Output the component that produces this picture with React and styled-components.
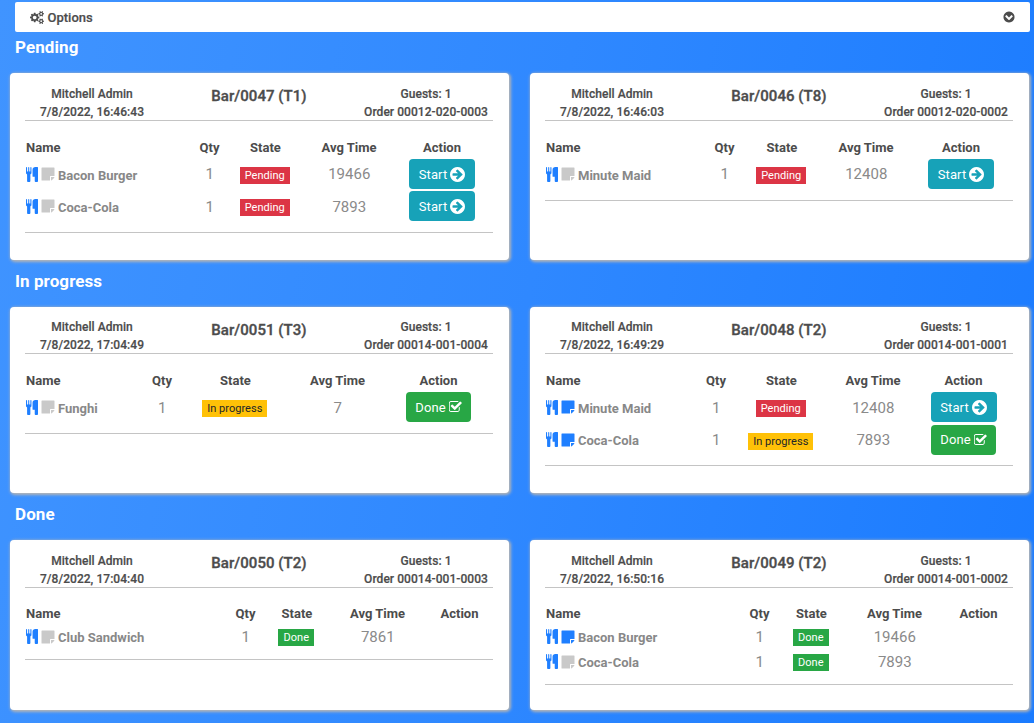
import React from 'react';
import styled, { createGlobalStyle } from 'styled-components';

const GlobalStyle = createGlobalStyle`
  * { box-sizing: border-box; }
  html, body { margin: 0; height: 100%; overflow: hidden; }
  body { font-family: Roboto, "Liberation Sans", sans-serif; color: #4c4c4c; }
`;

const Screen = styled.main`
  height: 723px;
  padding: 2px 4px 0 9.5px;
  overflow: hidden;
  background: linear-gradient(100deg, #4094ff 0%, #2f88ff 50%, #1a7bff 100%);
`;

const OptionsBar = styled.header`
  display: flex;
  align-items: center;
  justify-content: space-between;
  height: 30px;
  margin-left: 5.5px;
  padding: 0 15px;
  background: #fff;
  border-radius: 2px;
`;

const OptionsLabel = styled.span`
  display: flex;
  align-items: center;
  gap: 3.5px;
  font-size: 13px;
  font-weight: 500;
  -webkit-text-stroke: 0.2px;
`;

const Section = styled.section`
  height: ${(p) => p.$height}px;
`;

const SectionTitle = styled.h2`
  height: 41px;
  margin: 0;
  padding-left: 5.5px;
  font-size: 17px;
  line-height: 31px;
  font-weight: 700;
  letter-spacing: 0.08px;
  color: #fff;
`;

const CardRow = styled.div`
  display: grid;
  grid-template-columns: 499px 499px;
  gap: 21px;
`;

const Card = styled.article`
  height: ${(p) => p.$height}px;
  padding: ${(p) => p.$top}px 15.5px 0;
  background: #fff;
  border-radius: 4px;
  box-shadow: 1px 1px 3px 1px #b5b5b5;
`;

const CardHeader = styled.div`
  display: grid;
  grid-template-columns: 134px 200px 134px;
  height: 36px;
  border-bottom: 1px solid #c4c4c4;
  text-align: center;
`;

const Meta = styled.div`
  font-size: 12px;
  line-height: 18px;
  font-weight: 500;
  letter-spacing: 0.05px;
  white-space: nowrap;
  -webkit-text-stroke: 0.2px;
`;

const Title = styled.h3`
  margin: 0;
  font-size: 15px;
  line-height: ${(p) => p.$lineHeight}px;
  font-weight: 500;
  letter-spacing: 0.05px;
  -webkit-text-stroke: 0.35px;
`;

const Lines = styled.div`
  padding: ${(p) => p.$top}px 0 ${(p) => p.$bottom}px;
  border-bottom: 1px solid #c4c4c4;
`;

const Line = styled.div`
  display: grid;
  grid-template-columns: ${(p) => p.$columns};
  align-items: center;
  justify-items: center;
  height: ${(p) => p.$height}px;
`;

const HeadCell = styled.span`
  padding-left: ${(p) => (p.$start ? 1 : 0)}px;
  justify-self: ${(p) => (p.$start ? 'start' : 'center')};
  font-size: 13px;
  font-weight: 700;
  white-space: nowrap;
`;

const Product = styled.span`
  display: flex;
  align-items: center;
  justify-self: start;
  gap: 3px;
  padding-left: 1px;
  font-size: 13px;
  font-weight: 700;
  color: #888;
  white-space: nowrap;
`;

const ProductName = styled.span`
  padding-top: 2px;
`;

const Figure = styled.span`
  padding: 0.5px 0 0 0.5px;
  font-size: 15px;
  color: #8a8a8a;
`;

const stateColors = {
  Pending: ['#dc3545', '#fff'],
  'In progress': ['#ffc107', '#212529'],
  Done: ['#28a745', '#fff'],
};

const Badge = styled.span`
  height: 17px;
  margin: ${(p) => (p.$state === 'Done' ? 2 : 3)}px 1.5px 0 0;
  padding: 1px 5px 0;
  font-size: 11px;
  line-height: 16px;
  letter-spacing: 0.03px;
  white-space: nowrap;
  background: ${(p) => stateColors[p.$state][0]};
  color: ${(p) => stateColors[p.$state][1]};
`;

const ActionButton = styled.button`
  display: flex;
  align-items: center;
  justify-content: center;
  gap: 3px;
  width: ${(p) => (p.$done ? 65 : 66)}px;
  height: 30px;
  padding: 0;
  border: 0;
  border-radius: 4px;
  font: 400 13px Roboto, "Liberation Sans", sans-serif;
  letter-spacing: 0.1px;
  color: #fff;
  background: ${(p) => (p.$done ? '#28a745' : '#17a2b8')};
`;

const Glyph = styled.svg`
  display: block;
  flex: none;
  fill: ${(p) => p.$color || 'currentColor'};
`;

const DISC = 'q0 209-103 385.5t-279.5 279.5-385.5 103-385.5-103-279.5-279.5-103-385.5 103-385.5 279.5-279.5 385.5-103 385.5 103 279.5 279.5 103 385.5z';
const SMALL_COG = 'v140q0 16-149 31-12 27-30 52 51 113 51 138 0 4-4 7-122 71-124 71-8 0-46-47t-52-68q-20 2-30 2t-30-2q-14 21-52 68t-46 47q-2 0-124-71-4-3-4-7 0-25 51-138-18-25-30-52-149-15-149-31v-140q0-16 149-31 13-29 30-52-51-113-51-138 0-4 4-7 4-2 35-20t59-34 30-16q8 0 46 46.5t52 67.5q20-2 30-2t30 2q51-71 92-112l6-2q4 0 124 70 4 3 4 7 0 25-51 138 17 23 30 52 149 15 149 31z';

const CogsIcon = () => (
  <Glyph width="14" height="13" viewBox="0 0 1920 1792">
    <path d={'M896 896q0-106-75-181t-181-75-181 75-75 181 75 181 181 75 181-75 75-181zm768 512q0-52-38-90t-90-38-90 38-38 90q0 53 37.5 90.5t90.5 37.5 90.5-37.5 37.5-90.5zm0-1024q0-52-38-90t-90-38-90 38-38 90q0 53 37.5 90.5t90.5 37.5 90.5-37.5 37.5-90.5zm-384 421v185q0 10-7 19.5t-16 10.5l-155 24q-11 35-32 76 34 48 90 115 7 11 7 20 0 12-7 19-23 30-82.5 89.5t-78.5 59.5q-11 0-21-7l-115-90q-37 19-77 31-11 108-23 155-7 24-30 24h-186q-11 0-20-7.5t-10-17.5l-23-153q-34-10-75-31l-118 89q-7 7-20 7-11 0-21-8-144-133-144-160 0-9 7-19 10-14 41-53t47-61q-23-44-35-82l-152-24q-10-1-17-9.5t-7-19.5v-185q0-10 7-19.5t16-10.5l155-24q11-35 32-76-34-48-90-115-7-11-7-20 0-12 7-20 22-30 82-89t79-59q11 0 21 7l115 90q34-18 77-32 11-108 23-154 7-24 30-24h186q11 0 20 7.5t10 17.5l23 153q34 10 75 31l118-89q8-7 20-7 11 0 21 8 144 133 144 160 0 8-7 19-12 16-42 54t-45 60q23 48 34 82l152 23q10 2 17 10.5t7 19.5zm640 533' + SMALL_COG + 'm0-1024' + SMALL_COG} />
  </Glyph>
);

const ChevronCircleIcon = () => (
  <Glyph width="12" height="12" viewBox="64 64 1664 1664">
    <path fillRule="evenodd" d={'M941 1299l454-454q19-19 19-45t-19-45l-102-102q-19-19-45-19t-45 19l-307 307-307-307q-19-19-45-19t-45 19l-102 102q-19 19-19 45t19 45l454 454q19 19 45 19t45-19zM1664 896' + DISC} />
  </Glyph>
);

const CutleryIcon = () => (
  <Glyph $color="#1f7fff" width="12" height="15" viewBox="192 0 1408 1792" preserveAspectRatio="none">
    <path d="M832 64v640q0 61-35.5 111t-92.5 70v779q0 52-38 90t-90 38h-128q-52 0-90-38t-38-90v-779q-57-20-92.5-70t-35.5-111v-640q0-26 19-45t45-19 45 19 19 45v416q0 26 19 45t45 19 45-19 19-45v-416q0-26 19-45t45-19 45 19 19 45v416q0 26 19 45t45 19 45-19 19-45v-416q0-26 19-45t45-19 45 19 19 45zm768 0v1600q0 52-38 90t-90 38h-128q-52 0-90-38t-38-90v-512h-224q-13 0-22.5-9.5t-9.5-22.5v-800q0-132 94-226t226-94h256q26 0 45 19t19 45z" />
  </Glyph>
);

const NoteIcon = ({ active }) => (
  <Glyph $color={active ? '#1f7fff' : '#c9c9c9'} width="14" height="14" viewBox="0 0 14 14">
    <path d="M1 .5H13Q13.5 .5 13.5 1V9H9.5Q9 9 9 9.5V13.5H1Q.5 13.5 .5 13V1Q.5 .5 1 .5ZM10 10H13.4Q13.3 10.8 12.8 11.3L11.3 12.8Q10.8 13.3 10 13.4Z" />
  </Glyph>
);

const ArrowCircleIcon = () => (
  <Glyph width="15" height="15" viewBox="128 128 1536 1536">
    <path fillRule="evenodd" d={'M1413 896q0-27-18-45l-91-91-362-362q-18-18-45-18t-45 18l-91 91q-18 18-18 45t18 45l189 189h-502q-26 0-45 19t-19 45v128q0 26 19 45t45 19h502l-189 189q-18 18-18 45t18 45l91 91q18 18 45 18t45-18l362-362 91-91q18-18 18-45zM1664 896' + DISC} />
  </Glyph>
);

const CheckSquareIcon = () => (
  <Glyph width="13" height="12" viewBox="128 128 1600 1536">
    <path d="M1472 930v318q0 119-84.5 203.5t-203.5 84.5h-832q-119 0-203.5-84.5t-84.5-203.5v-832q0-119 84.5-203.5t203.5-84.5h832q63 0 117 25 15 7 18 23 3 17-9 29l-49 49q-10 10-23 10-3 0-9-2-23-6-45-6h-832q-66 0-113 47t-47 113v832q0 66 47 113t113 47h832q66 0 113-47t47-113v-254q0-13 9-22l64-64q10-10 23-10 6 0 12 3 20 8 20 29zm231-489l-814 814q-24 24-57 24t-57-24l-430-430q-24-24-24-57t24-57l110-110q24-24 57-24t57 24l263 263 647-647q24-24 57-24t57 24l110 110q24 24 24 57t-24 57z" />
  </Glyph>
);

const sections = [
  {
    title: 'Pending', height: 234,
    metrics: { card: 186.5, top: 12, title: 22, linesTop: 15, row: 32.3, linesBottom: 9.5 },
    orders: [
      { name: 'Bar/0047 (T1)', date: '7/8/2022, 16:46:43', order: '00012-020-0003', columns: '170px 29px 83px 84px 102px',
        lines: [['Bacon Burger', 'Pending', 19466], ['Coca-Cola', 'Pending', 7893]] },
      { name: 'Bar/0046 (T8)', date: '7/8/2022, 16:46:03', order: '00012-020-0002', columns: '163px 33px 82px 86px 104px',
        lines: [['Minute Maid', 'Pending', 12408]] },
    ],
  },
  {
    title: 'In progress', height: 233,
    metrics: { card: 185.5, top: 11, title: 24, linesTop: 15, row: 32.6, linesBottom: 9.2 },
    orders: [
      { name: 'Bar/0051 (T3)', date: '7/8/2022, 17:04:49', order: '00014-001-0004', columns: '119px 36px 111px 93px 109px',
        lines: [['Funghi', 'In progress', 7]] },
      { name: 'Bar/0048 (T2)', date: '7/8/2022, 16:49:29', order: '00014-001-0001', columns: '156px 30px 101px 82px 99px',
        lines: [['Minute Maid', 'Pending', 12408, true], ['Coca-Cola', 'In progress', 7893, true]] },
    ],
  },
  {
    title: 'Done', height: 220,
    metrics: { card: 169.5, top: 12, title: 22, linesTop: 14, row: 25, linesBottom: 9.5 },
    orders: [
      { name: 'Bar/0050 (T2)', date: '7/8/2022, 17:04:40', order: '00014-001-0003', columns: '201px 39px 64px 97px 67px',
        lines: [['Club Sandwich', 'Done', 7861]] },
      { name: 'Bar/0049 (T2)', date: '7/8/2022, 16:50:16', order: '00014-001-0002', columns: '196px 37px 67px 99px 69px',
        lines: [['Bacon Burger', 'Done', 19466, true], ['Coca-Cola', 'Done', 7893]] },
    ],
  },
];

function Action({ state }) {
  if (state === 'Pending') return <ActionButton>Start<ArrowCircleIcon /></ActionButton>;
  if (state === 'In progress') return <ActionButton $done>Done<CheckSquareIcon /></ActionButton>;
  return <span />;
}

function OrderCard({ order, metrics }) {
  return (
    <Card $height={metrics.card} $top={metrics.top}>
      <CardHeader>
        <Meta>Mitchell Admin<br />{order.date}</Meta>
        <Title $lineHeight={metrics.title}>{order.name}</Title>
        <Meta>Guests: 1<br />Order {order.order}</Meta>
      </CardHeader>
      <Lines $top={metrics.linesTop} $bottom={metrics.linesBottom}>
        <Line $columns={order.columns} $height={22}>
          <HeadCell $start>Name</HeadCell>
          <HeadCell>Qty</HeadCell>
          <HeadCell>State</HeadCell>
          <HeadCell>Avg Time</HeadCell>
          <HeadCell>Action</HeadCell>
        </Line>
        {order.lines.map(([product, state, time, noted]) => (
          <Line key={product} $columns={order.columns} $height={metrics.row}>
            <Product><CutleryIcon /><NoteIcon active={noted} /><ProductName>{product}</ProductName></Product>
            <Figure>1</Figure>
            <Badge $state={state}>{state}</Badge>
            <Figure>{time}</Figure>
            <Action state={state} />
          </Line>
        ))}
      </Lines>
    </Card>
  );
}

export default function App() {
  return (
    <Screen>
      <GlobalStyle />
      <OptionsBar>
        <OptionsLabel><CogsIcon />Options</OptionsLabel>
        <ChevronCircleIcon />
      </OptionsBar>
      {sections.map((s) => (
        <Section key={s.title} $height={s.height}>
          <SectionTitle>{s.title}</SectionTitle>
          <CardRow>
            {s.orders.map((o) => (
              <OrderCard key={o.name} order={o} metrics={s.metrics} />
            ))}
          </CardRow>
        </Section>
      ))}
    </Screen>
  );
}
